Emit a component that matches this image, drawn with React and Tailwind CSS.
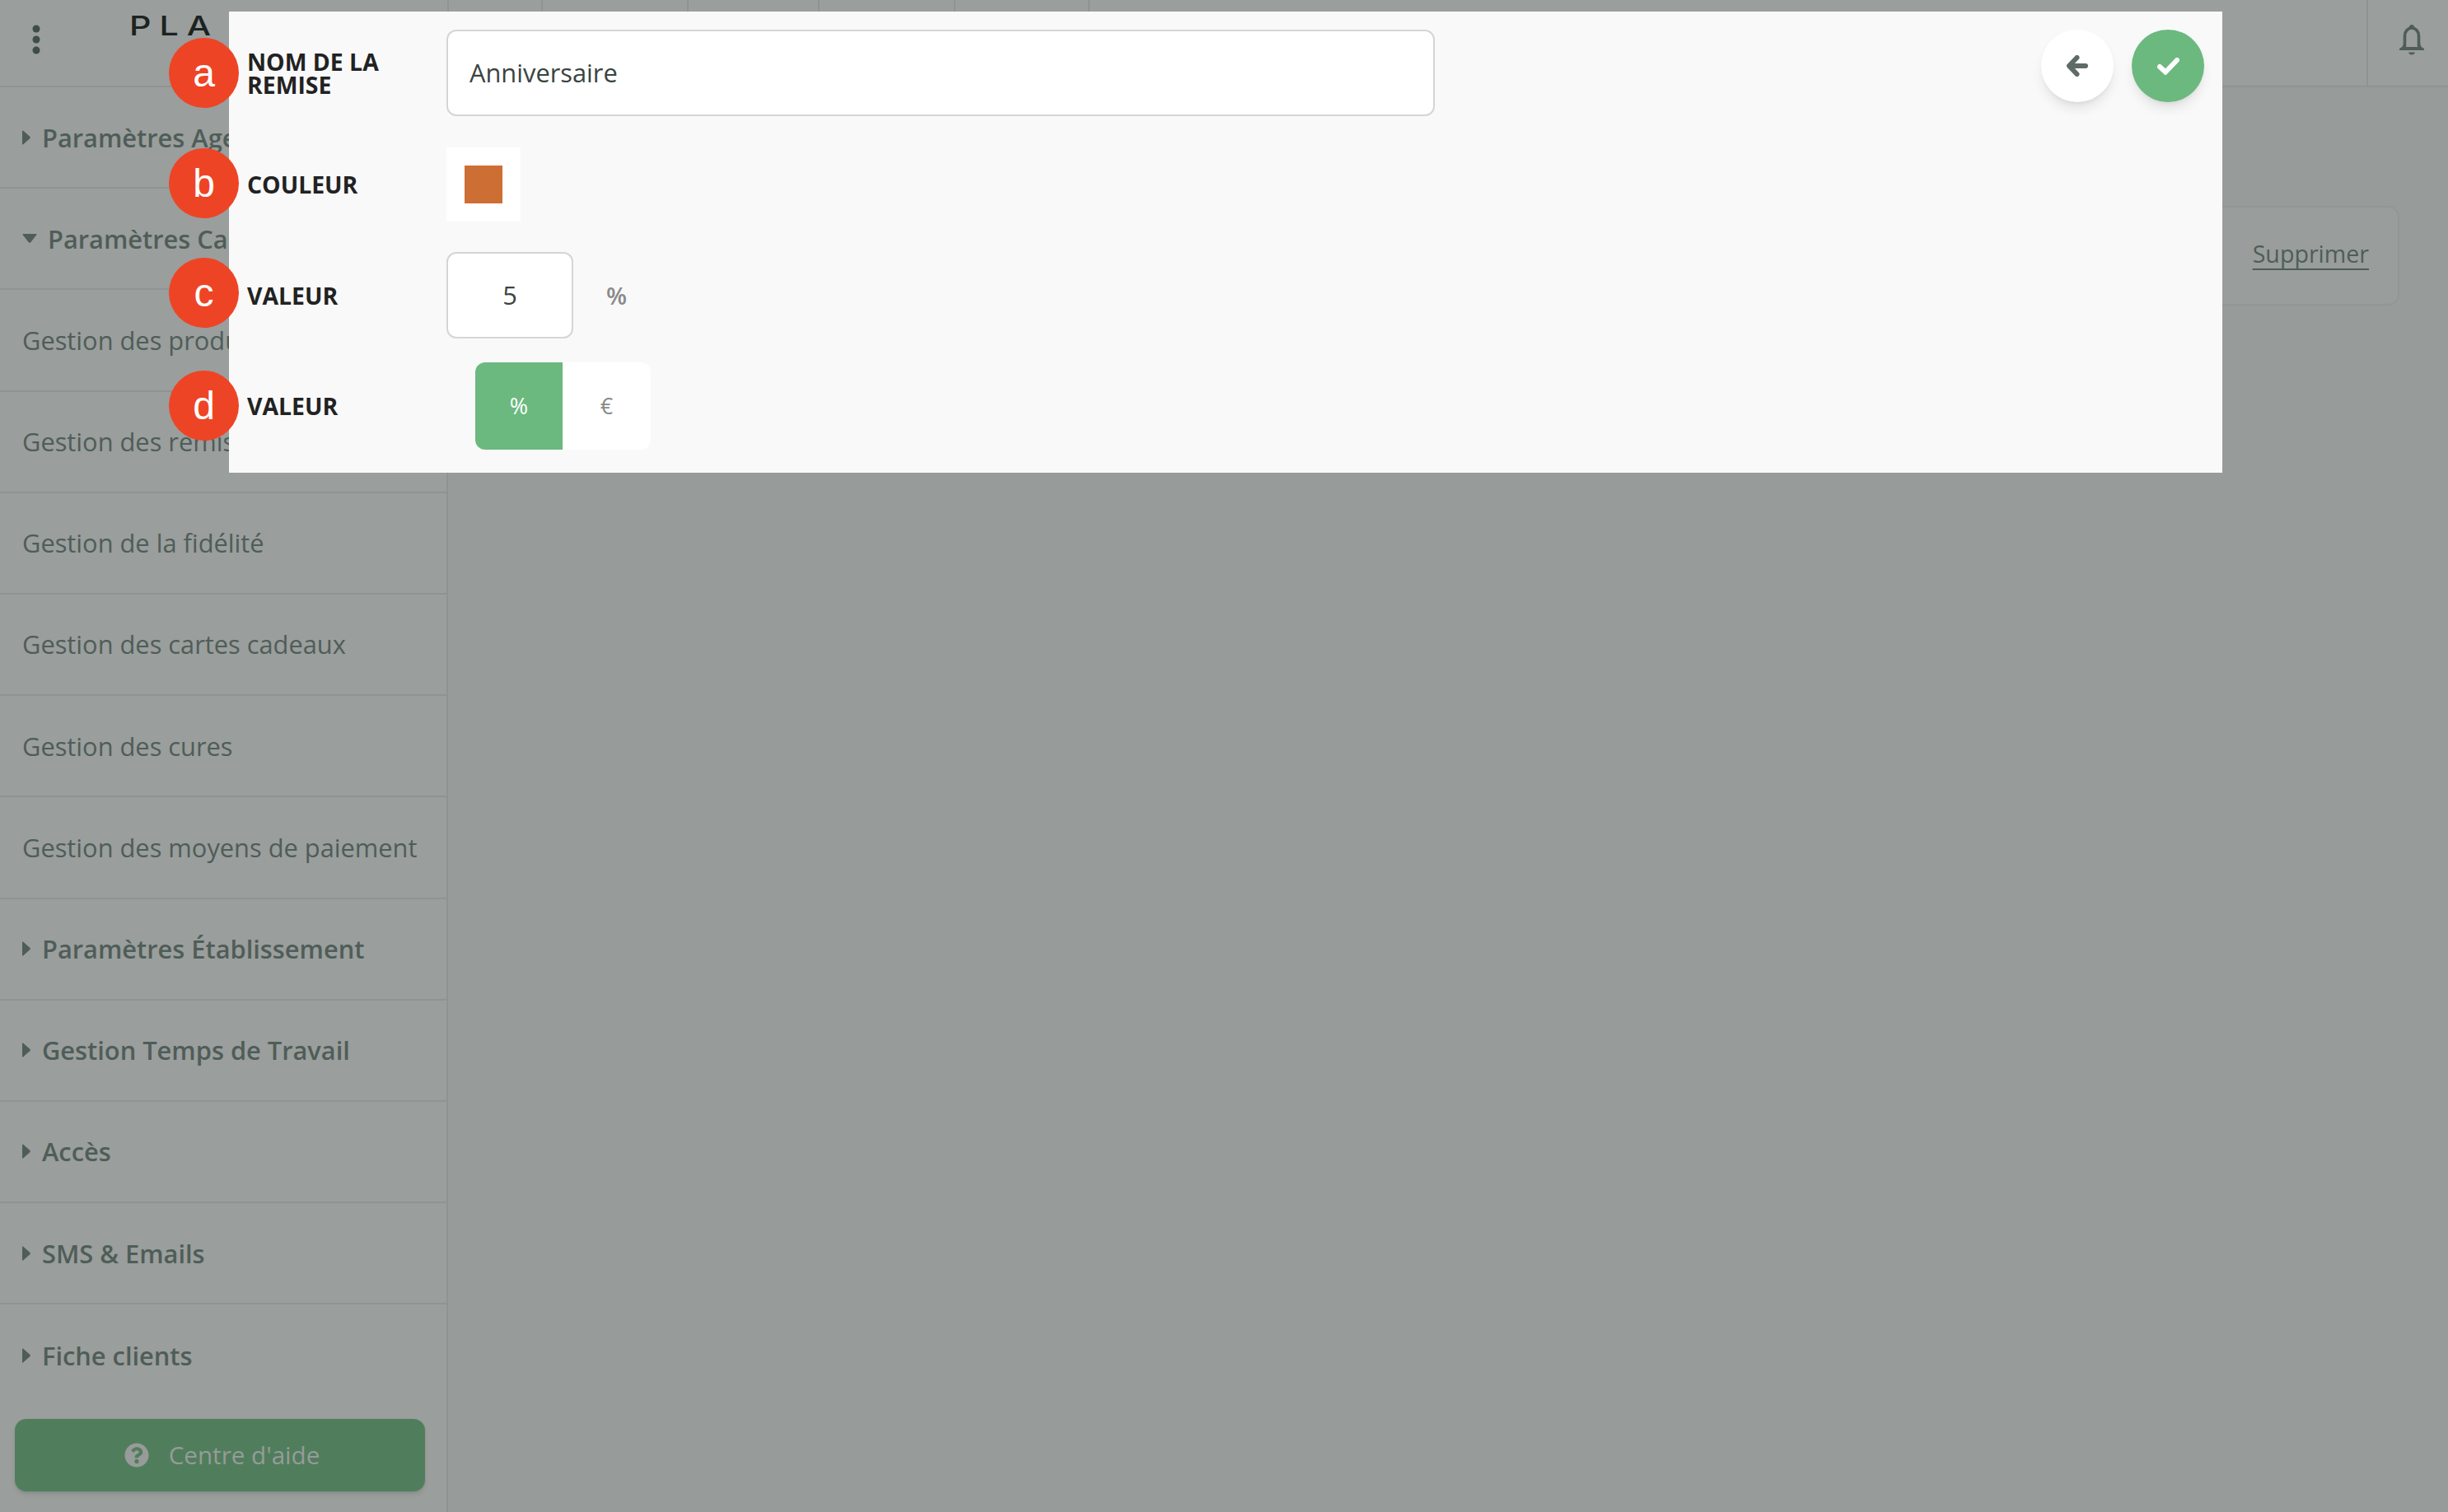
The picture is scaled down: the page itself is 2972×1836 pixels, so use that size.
import React from 'react';
import { FaQuestionCircle } from 'react-icons/fa';

const tabWidths = ['w-[114px]', 'w-[177px]', 'w-[159px]', 'w-[165px]', 'w-[163px]'];

const menu = [
  { label: 'Paramètres Agenda', head: true },
  { label: 'Paramètres Caisse', head: true, open: true },
  { label: 'Gestion des produits' },
  { label: 'Gestion des remises' },
  { label: 'Gestion de la fidélité' },
  { label: 'Gestion des cartes cadeaux' },
  { label: 'Gestion des cures' },
  { label: 'Gestion des moyens de paiement' },
  { label: 'Paramètres Établissement', head: true },
  { label: 'Gestion Temps de Travail', head: true },
  { label: 'Accès', head: true },
  { label: 'SMS & Emails', head: true },
  { label: 'Fiche clients', head: true, last: true },
];

const CaretRight = () => (
  <svg className="mr-[14px] h-[18px] w-[10px] shrink-0 fill-[#4f5d58]" viewBox="0 0 10 18">
    <path d="M1 0.5 L9.5 8 Q10 9 9.5 10 L1 17.5 Q0 18 0 16.5 V1.5 Q0 0 1 0.5Z" />
  </svg>
);

const CaretDown = () => (
  <svg className="mr-[13px] h-[11px] w-[18px] shrink-0 fill-[#4f5d58]" viewBox="0 0 18 11">
    <path d="M1.5 0 H16.5 Q18 0 17.5 1 L10 10.5 Q9 11 8 10.5 L0.5 1 Q0 0 1.5 0Z" />
  </svg>
);

const SideRow = ({ item }) => (
  <div
    className={`flex h-[123.2px] items-center pl-[27px] text-[30.8px] text-[#4f5d58] ${
      item.last ? '' : 'border-b-2 border-[#8f9391]'
    } ${item.head ? 'font-semibold' : ''}`}
  >
    {item.head && (item.open ? <CaretDown /> : <CaretRight />)}
    {item.label}
  </div>
);

const Badge = ({ letter, className }) => (
  <div
    className={`absolute left-[-73px] flex h-[85px] w-[85px] items-center justify-center rounded-full bg-[#ee4426] font-['Liberation_Sans',sans-serif] text-[48px] text-white ${className}`}
  >
    {letter}
  </div>
);

const Row = ({ letter, label, className, badgeClass, children }) => (
  <div className={`relative flex items-center pl-[22px] ${className}`}>
    <Badge letter={letter} className={badgeClass} />
    <div className="w-[242px] shrink-0 text-[28.4px] font-bold uppercase leading-[28px] text-[#222222]">{label}</div>
    {children}
  </div>
);

export default function App() {
  return (
    <div className="relative h-[1836px] w-[2972px] overflow-hidden bg-[#979b99] font-['Open_Sans',sans-serif]">
      {/* top bar */}
      <header className="flex h-[106px] items-stretch border-b-2 border-[#8f9391] bg-[#9a9e9c]">
        <div className="flex w-[543px] shrink-0 items-start">
          <svg className="ml-[39px] mt-[30px] h-[36px] w-[10px] fill-[#3f4c47]" viewBox="0 0 10 36">
            <circle cx="5" cy="5" r="4.5" />
            <circle cx="5" cy="18" r="4.5" />
            <circle cx="5" cy="31" r="4.5" />
          </svg>
          {/* the rest of the logo sits behind the modal */}
          <span className="ml-[108px] mt-[13px] block origin-left scale-x-125 whitespace-nowrap font-['Inter',sans-serif] text-[33px] font-medium leading-[36px] tracking-[8px] text-[#1c2321]">
            PLA
          </span>
        </div>
        {tabWidths.map((w) => (
          <div key={w} className={`${w} border-l-2 border-[#8f9391]`} />
        ))}
        <div className="flex-1 border-l-2 border-[#8f9391]" />
        <div className="w-[99px] border-l-2 border-[#8f9391] pl-[38px] pt-[30px]">
          <svg className="h-[37px] w-[30px]" viewBox="0 0 30 37">
            <path d="M15 0 a3 3 0 0 1 3 3 v2 h-6 v-2 a3 3 0 0 1 3 -3z" fill="#4f5d58" />
            <path d="M6.5 26 V13.5 a8.5 9.5 0 0 1 17 0 V26" fill="none" stroke="#4f5d58" strokeWidth="3.6" />
            <path d="M5 22 h3 v5 h14 v-5 h3 q0 5 5 7 v2 h-30 v-2 q5 -2 5 -7z" fill="#4f5d58" />
            <path d="M11 33.5 h8 q-1 3 -4 3 t-4 -3z" fill="#4f5d58" />
          </svg>
        </div>
      </header>

      <div className="flex h-[1730px]">
        {/* sidebar */}
        <aside className="relative w-[544px] shrink-0 border-r-2 border-[#8f9391] bg-[#9a9e9c]">
          {menu.map((item) => (
            <SideRow key={item.label} item={item} />
          ))}
          <div className="absolute bottom-[25px] left-[18px] flex h-[88px] w-[498px] items-center justify-center gap-[24px] rounded-[14px] bg-[#507e5c] pl-[5px] text-[29.6px] text-[#979b99] shadow-md">
            <FaQuestionCircle className="h-[30px] w-[30px]" />
            Centre d'aide
          </div>
        </aside>

        {/* content */}
        <main className="flex-1 pr-[59px] pt-[144px]">
          <div className="flex h-[121px] items-center justify-end rounded-[14px] border-2 border-[#929694] bg-[#999d9b] pb-[4px] pr-[35px]">
            <span className="text-[28.6px] text-[#4f5d58] underline underline-offset-[7px]">Supprimer</span>
          </div>
        </main>
      </div>

      {/* modal */}
      <div className="absolute left-[278px] top-[14px] flex h-[560px] w-[2420px] justify-between bg-[#f9f9f9] pr-[22px] pt-[22px]">
        <div className="flex flex-col">
          <Row letter="a" label="Nom de la remise" className="h-[105px]" badgeClass="top-[10px]">
            <div className="flex h-full w-[1200px] items-center rounded-[12px] border-2 border-[#d4d6d5] bg-white pl-[26px] text-[30.8px] text-[#3a4441]">
              Anniversaire
            </div>
          </Row>
          <Row letter="b" label="Couleur" className="mt-[38px] h-[90px]" badgeClass="top-[1px]">
            <div className="flex h-[90px] w-[90px] items-center justify-center bg-white">
              <div className="h-[46px] w-[46px] bg-[#cd6f34]" />
            </div>
          </Row>
          <Row letter="c" label="Valeur" className="mt-[37px] h-[105px]" badgeClass="top-[7px]">
            <div className="flex h-full w-[154px] items-center justify-center rounded-[12px] border-2 border-[#d4d6d5] bg-white text-[30.8px] text-[#3a4441]">
              5
            </div>
            <span className="ml-[40px] text-[29px] font-semibold text-[#8a8a8a]">%</span>
          </Row>
          <Row letter="d" label="Valeur" className="mt-[29px] h-[106px]" badgeClass="top-[10px]">
            <div className="ml-[35px] flex h-full w-[213px] overflow-hidden rounded-[12px] bg-white text-[27px]">
              <div className="flex w-[106px] items-center justify-center bg-[#6bb97f] text-white">%</div>
              <div className="flex flex-1 items-center justify-center text-[#8a8a8a]">€</div>
            </div>
          </Row>
        </div>

        <div className="flex gap-[22px]">
          <button className="flex h-[88px] w-[88px] items-center justify-center rounded-full bg-white shadow-lg">
            <svg className="h-[26px] w-[26px]" viewBox="0 0 26 26" fill="none" stroke="#5f6b66" strokeWidth="6" strokeLinecap="round" strokeLinejoin="round">
              <path d="M12.5 3 L3 13 L12.5 23" />
              <path d="M4 13 H23" />
            </svg>
          </button>
          <button className="flex h-[88px] w-[88px] items-center justify-center rounded-full bg-[#6bb97f] shadow-lg">
            <svg className="h-[21px] w-[27px]" viewBox="0 0 27 21" fill="none" stroke="#ffffff" strokeWidth="6" strokeLinecap="round" strokeLinejoin="miter">
              <path d="M3 11 L10 17.5 L24 3" />
            </svg>
          </button>
        </div>
      </div>
    </div>
  );
}
